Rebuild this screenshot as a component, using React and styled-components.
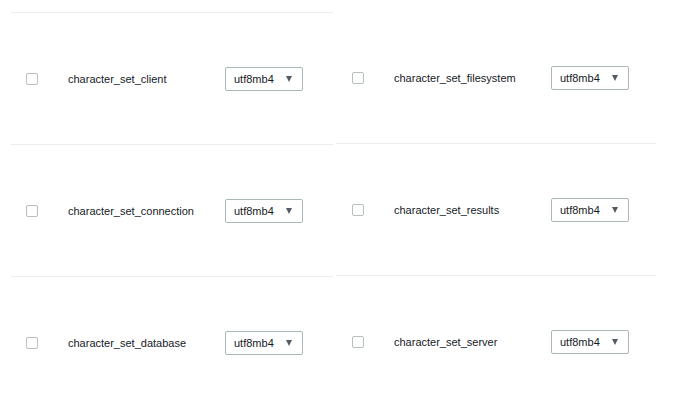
import React from 'react'
import styled, { createGlobalStyle } from 'styled-components'

const GlobalStyle = createGlobalStyle`
  body {
    margin: 0;
    background: #ffffff;
    font-family: 'Liberation Sans', Arial, sans-serif;
    color: #16191f;
  }
`

const COLUMNS = [
  {
    topLine: true,
    items: ['character_set_client', 'character_set_connection', 'character_set_database'],
  },
  {
    topLine: false,
    items: ['character_set_filesystem', 'character_set_results', 'character_set_server'],
  },
]

const App = () => {
  return (
    <>
      <GlobalStyle />
      <Page>
        {COLUMNS.map((col, c) => (
          <Column key={c} $offset={c === 1}>
            {col.items.map((name, i) => (
              <Row key={name} $line={i > 0 || col.topLine} $shift={c === 1}>
                <Checkbox />
                <Label>{name}</Label>
                <Select>
                  <span>utf8mb4</span>
                  <Caret />
                </Select>
              </Row>
            ))}
          </Column>
        ))}
      </Page>
    </>
  )
}

export default App

const Page = styled.div`
  display: grid;
  grid-template-columns: 322px 320px;
  column-gap: 3px;
  padding: 12px 0 0 11px;
`

const Column = styled.div`
  display: flex;
  flex-direction: column;
  margin-top: ${(p) => (p.$offset ? '-1px' : '0')};
`

const Row = styled.div`
  display: grid;
  grid-template-columns: 42px 157px auto;
  align-items: center;
  height: 132px;
  box-sizing: border-box;
  padding-left: ${(p) => (p.$shift ? '16px' : '15px')};
  border-top: 1px solid ${(p) => (p.$line ? '#eaeded' : 'transparent')};
`

const Checkbox = styled.span`
  display: block;
  width: 12px;
  height: 12px;
  box-sizing: border-box;
  border: 1px solid #b4bfc0;
  border-radius: 2px;
  background: #ffffff;
`

const Label = styled.span`
  font-size: 11px;
  color: #16191f;
  white-space: nowrap;
`

const Select = styled.div`
  display: flex;
  align-items: center;
  gap: 12px;
  width: 78px;
  height: 24px;
  box-sizing: border-box;
  padding: 0 10px 0 8px;
  border: 1px solid #aab7b8;
  border-radius: 2px;
  font-size: 11px;
  color: #16191f;
  justify-self: start;
`

const Caret = styled.span`
  width: 0;
  height: 0;
  border-left: 3.5px solid transparent;
  border-right: 3.5px solid transparent;
  border-top: 6px solid #545b64;
`
